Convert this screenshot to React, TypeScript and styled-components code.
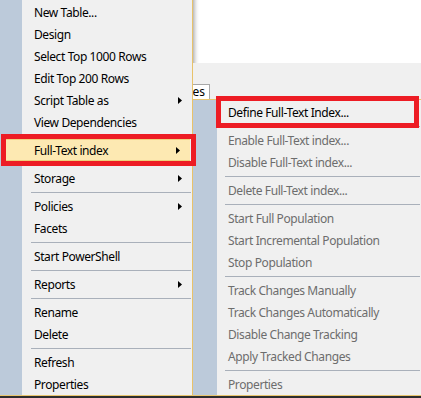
import React from 'react';
import styled, { createGlobalStyle } from 'styled-components';

const GlobalStyle = createGlobalStyle`
  body {
    margin: 0;
    background: #f0f0f0;
    font-family: 'Noto Sans', 'Liberation Sans', sans-serif;
  }
`;

const Screen = styled.div`
  width: 421px;
  height: 398px;
  display: flex;
  flex-direction: column;
  overflow: hidden;
`;

const Main = styled.div`
  display: flex;
  height: 395px;
`;

const BottomEdge = styled.div`
  height: 1px;
  background: #e8c66f;
  border-bottom: 2px solid #2e2e2e;
`;

const Menu = styled.div<{ $gutter: number; $width?: number }>`
  display: flex;
  flex-direction: column;
  flex: ${props => (props.$width ? `0 0 ${props.$width}px` : '1')};
  padding-top: 1px;
  background: linear-gradient(
    to right,
    #bccada 0,
    #bccada ${props => props.$gutter}px,
    #f0f0f0 ${props => props.$gutter}px
  );
`;

const LeftMenu = styled(Menu)`
  border-right: 1px solid #e8c26a;
`;

const Item = styled.div<{ $pad: number; $disabled?: boolean; $hot?: boolean }>`
  position: relative;
  display: flex;
  align-items: center;
  height: 22px;
  box-sizing: border-box;
  padding-left: ${props => props.$pad}px;
  font-size: 12px;
  letter-spacing: -0.4px;
  color: ${props => (props.$disabled ? '#6d6d6d' : '#000')};
  white-space: nowrap;
  ${props =>
    props.$hot &&
    `
    margin: 0 2px;
    padding-left: ${props.$pad - 2}px;
    background: #fde9b2;
    border-top: 1px solid #f1d27e;
    border-bottom: 1px solid #efcf78;
  `}
`;

const Label = styled.span`
  flex: 1;
`;

const Arrow = styled.svg`
  width: 4px;
  height: 7px;
  margin-right: 10px;
`;

const Separator = styled.div<{ $left: number }>`
  height: 6px;
  display: flex;
  align-items: center;
  padding-left: ${props => props.$left}px;
  padding-right: 1px;
  &::after {
    content: '';
    flex: 1;
    height: 1px;
    background: #a9b0ba;
  }
`;

const RedBox = styled.div<{ $inset: string }>`
  position: absolute;
  inset: ${props => props.$inset};
  border: 5px solid #ed1c24;
  pointer-events: none;
`;

const Right = styled.div`
  flex: 1;
  display: flex;
  flex-direction: column;
`;

const TopWhite = styled.div`
  height: 63px;
  background: linear-gradient(to right, #b9b9b9 0, #dcdcdc 2px, #f4f4f4 4px, #fff 6px);
`;

const GrayBand = styled.div`
  height: 36px;
  display: flex;
  align-items: flex-end;
  background: #f0f0f0;
`;

const Tab = styled.div`
  width: 17px;
  height: 15px;
  box-sizing: border-box;
  border-top: 1px solid #a8a8a8;
  border-right: 1px solid #a8a8a8;
  background: #fff;
  font-size: 12px;
  line-height: 14px;
  color: #000;
  overflow: hidden;
  display: flex;
  justify-content: flex-end;
  padding-right: 4px;
`;

const SubMenu = styled(Menu)`
  border-top: 1px solid #e8c66f;
`;

const ArrowIcon = () => (
  <Arrow viewBox="0 0 4 7">
    <polygon points="0,0 4,3.5 0,7" fill="#000" />
  </Arrow>
);

type Entry =
  | { sep: true }
  | { label: string; sub?: boolean; disabled?: boolean; hot?: boolean; boxed?: boolean };

const leftItems: Entry[] = [
  { label: 'New Table...' },
  { label: 'Design' },
  { label: 'Select Top 1000 Rows' },
  { label: 'Edit Top 200 Rows' },
  { label: 'Script Table as', sub: true },
  { label: 'View Dependencies' },
  { sep: true },
  { label: 'Full-Text index', sub: true, hot: true, boxed: true },
  { sep: true },
  { label: 'Storage', sub: true },
  { sep: true },
  { label: 'Policies', sub: true },
  { label: 'Facets' },
  { sep: true },
  { label: 'Start PowerShell' },
  { sep: true },
  { label: 'Reports', sub: true },
  { sep: true },
  { label: 'Rename' },
  { label: 'Delete' },
  { sep: true },
  { label: 'Refresh' },
  { label: 'Properties' },
];

const subItems: Entry[] = [
  { label: 'Define Full-Text Index...', boxed: true },
  { sep: true },
  { label: 'Enable Full-Text index...', disabled: true },
  { label: 'Disable Full-Text index...', disabled: true },
  { sep: true },
  { label: 'Delete Full-Text index...', disabled: true },
  { sep: true },
  { label: 'Start Full Population', disabled: true },
  { label: 'Start Incremental Population', disabled: true },
  { label: 'Stop Population', disabled: true },
  { sep: true },
  { label: 'Track Changes Manually', disabled: true },
  { label: 'Track Changes Automatically', disabled: true },
  { label: 'Disable Change Tracking', disabled: true },
  { label: 'Apply Tracked Changes', disabled: true },
  { sep: true },
  { label: 'Properties', disabled: true },
];

const renderEntries = (entries: Entry[], pad: number, sepLeft: number, boxInset: string) =>
  entries.map((entry, index) => {
    if ('sep' in entry) return <Separator key={index} $left={sepLeft} />;
    return (
      <Item key={index} $pad={pad} $disabled={entry.disabled} $hot={entry.hot}>
        <Label>{entry.label}</Label>
        {entry.sub && <ArrowIcon />}
        {entry.boxed && <RedBox $inset={boxInset} />}
      </Item>
    );
  });

const App = () => {
  return (
    <>
      <GlobalStyle />
      <Screen>
        <Main>
          <LeftMenu $gutter={22} $width={192}>
            {renderEntries(leftItems, 34, 31, '-6px -6px -6px -1px')}
          </LeftMenu>
          <Right>
            <TopWhite />
            <GrayBand>
              <Tab>es</Tab>
            </GrayBand>
            <SubMenu $gutter={24}>
              {renderEntries(subItems, 35, 32, '-5px 2px -5px 23px')}
            </SubMenu>
          </Right>
        </Main>
        <BottomEdge />
      </Screen>
    </>
  );
};

export default App;
